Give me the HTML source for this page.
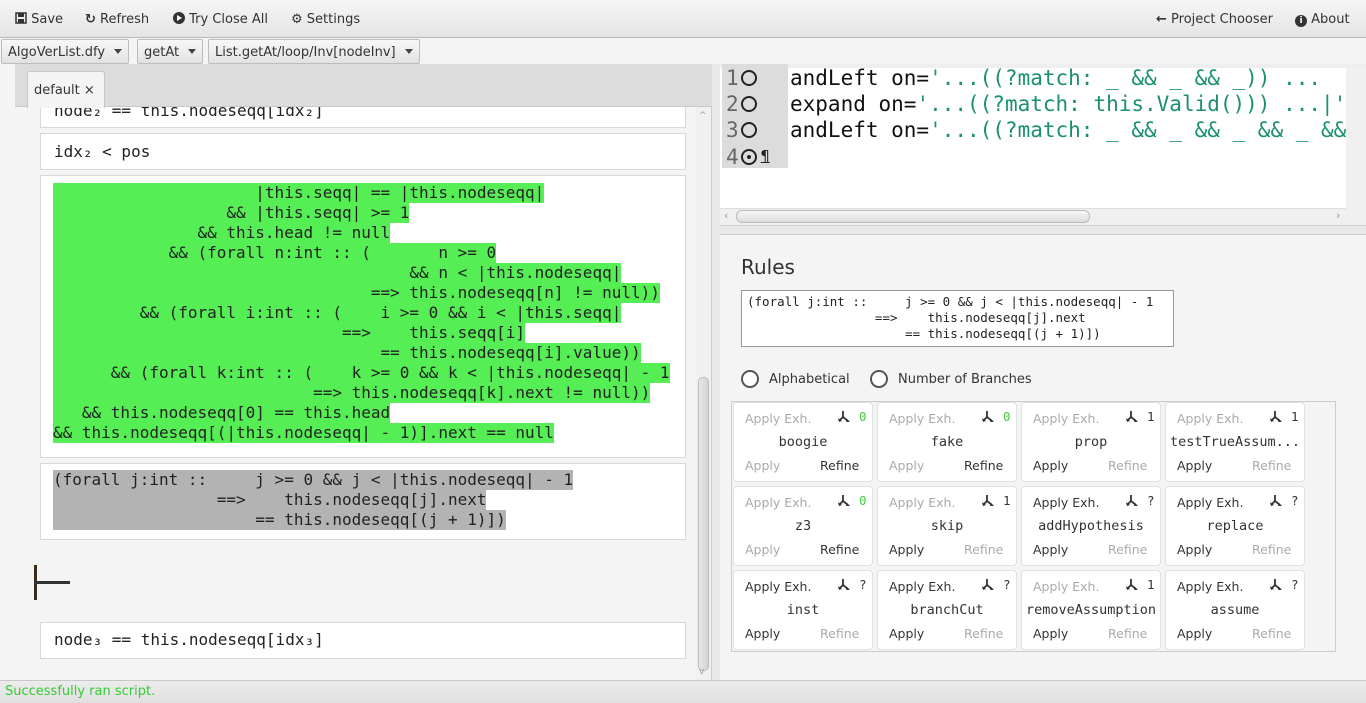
<!DOCTYPE html>
<html><head><meta charset="utf-8">
<style>
*{box-sizing:border-box;margin:0;padding:0}
body{width:1366px;height:703px;overflow:hidden;background:#f4f4f4;font-family:"DejaVu Sans","Liberation Sans",sans-serif;font-size:13px;color:#333;position:relative}
.a{position:absolute}
.mono{font-family:"DejaVu Sans Mono","Liberation Mono",monospace}
#tb{left:0;top:0;width:1366px;height:38px;background:linear-gradient(#f6f6f6,#e4e4e4);border-bottom:1px solid #b8b8b8}
.tbi{top:12px;font-size:13px;color:#333;white-space:nowrap}
.dd{top:39px;height:25px;background:linear-gradient(#f8f8f8,#e2e2e2);border:1px solid #bdbdbd;border-radius:2px;padding:5px 6px 0 6px;font-size:13px;white-space:nowrap}
.dd:after{content:"";display:inline-block;margin-left:9px;border-left:4px solid transparent;border-right:4px solid transparent;border-top:5px solid #444;vertical-align:2px}
.card{background:#fff;border:1px solid #d8d8d8;left:40px;width:646px}
.ln{white-space:pre;font-size:16px;line-height:20px;height:20px;color:#222}
.g{background:#55ee55;display:inline-block;height:20px}
.gr{background:#b3b3b3;display:inline-block;height:20px}
.rc{width:140px;height:80px;background:#fff;border:1px solid #e0e0e0;border-radius:4px}
.rc span{position:absolute;font-size:12.5px;white-space:nowrap}
.d{color:#333}.l{color:#aaa}
.nm{left:0;width:138px;text-align:center;top:31px;font-family:"DejaVu Sans Mono",monospace;font-size:13.5px!important;color:#333}
.cl{white-space:pre;height:26px}
.circ{display:inline-block;width:16px;height:16px;border:2px solid #222;border-radius:50%;margin-left:2px;vertical-align:-1px;position:relative}
</style></head><body>
<div id="tb" class="a"></div>
<div class="a tbi" style="left:15px"><svg width="12" height="12" viewBox="0 0 12 12" style="vertical-align:-1px"><rect x="1" y="1" width="10" height="10" fill="none" stroke="#333" stroke-width="1.5"/><rect x="3" y="1" width="6" height="4" fill="#333"/><rect x="3" y="7" width="6" height="4" fill="#333"/></svg> Save</div>
<div class="a tbi" style="left:85px"><span style="font-weight:bold">&#x21bb;</span> Refresh</div>
<div class="a tbi" style="left:173px"><span style="display:inline-block;width:12px;height:12px;border-radius:6px;background:#333;vertical-align:-1px;position:relative"><span style="position:absolute;left:4px;top:3px;border-left:5px solid #fff;border-top:3px solid transparent;border-bottom:3px solid transparent"></span></span> Try Close All</div>
<div class="a tbi" style="left:291px">&#x2699; Settings</div>
<div class="a tbi" style="left:1156px"><b>&#x2190;</b> Project Chooser</div>
<div class="a tbi" style="left:1295px"><span style="display:inline-block;width:12px;height:12px;border-radius:6px;background:#333;color:#fff;font-size:9px;text-align:center;line-height:12px;font-weight:bold;vertical-align:0px">i</span> About</div>

<div class="a dd" style="left:1px">AlgoVerList.dfy</div>
<div class="a dd" style="left:137px">getAt</div>
<div class="a dd" style="left:208px">List.getAt/loop/Inv[nodeInv]</div>

<!-- left panel -->
<div class="a" style="left:0;top:64px;width:712px;height:616px;background:#f4f4f4;border-right:1px solid #ccc"></div>
<div class="a card" style="top:95px;height:33px"><div class="a ln mono" style="left:13px;top:5px">node₂ == this.nodeseqq[idx₂]</div></div>
<div class="a" style="left:15px;top:64px;width:697px;height:43px;background:#dcdcdc;border-bottom:1px solid #c8c8c8"></div>
<div class="a" style="left:27px;top:71px;width:78px;height:37px;background:#f4f4f4;border:1px solid #c8c8c8;border-bottom:none;border-radius:3px 3px 0 0;padding:11px 0 0 6px;font-size:13px">default ×</div>
<div class="a card" style="top:133px;height:37px"><div class="a ln mono" style="left:13px;top:8px">idx₂ &lt; pos</div></div>
<div class="a card" style="top:175px;height:283px">
<div class="a mono" style="left:12px;top:7px">
<div class="ln"><span class="g">                     |this.seqq| == |this.nodeseqq|</span></div>
<div class="ln"><span class="g">                  &amp;&amp; |this.seqq| &gt;= 1</span></div>
<div class="ln"><span class="g">               &amp;&amp; this.head != null</span></div>
<div class="ln"><span class="g">            &amp;&amp; (forall n:int :: (       n &gt;= 0</span></div>
<div class="ln"><span class="g">                                     &amp;&amp; n &lt; |this.nodeseqq|</span></div>
<div class="ln"><span class="g">                                 ==&gt; this.nodeseqq[n] != null))</span></div>
<div class="ln"><span class="g">         &amp;&amp; (forall i:int :: (    i &gt;= 0 &amp;&amp; i &lt; |this.seqq|</span></div>
<div class="ln"><span class="g">                              ==&gt;    this.seqq[i]</span></div>
<div class="ln"><span class="g">                                  == this.nodeseqq[i].value))</span></div>
<div class="ln"><span class="g">      &amp;&amp; (forall k:int :: (    k &gt;= 0 &amp;&amp; k &lt; |this.nodeseqq| - 1</span></div>
<div class="ln"><span class="g">                           ==&gt; this.nodeseqq[k].next != null))</span></div>
<div class="ln"><span class="g">   &amp;&amp; this.nodeseqq[0] == this.head</span></div>
<div class="ln"><span class="g">&amp;&amp; this.nodeseqq[(|this.nodeseqq| - 1)].next == null</span></div>
</div></div>
<div class="a card" style="top:463px;height:77px">
<div class="a mono" style="left:12px;top:6px">
<div class="ln"><span class="gr">(forall j:int ::     j &gt;= 0 &amp;&amp; j &lt; |this.nodeseqq| - 1</span></div>
<div class="ln"><span class="gr">                 ==&gt;    this.nodeseqq[j].next</span></div>
<div class="ln"><span class="gr">                     == this.nodeseqq[(j + 1)])</span></div>
</div></div>
<div class="a" style="left:34px;top:565px;width:3px;height:35px;background:#3a2a1a"></div>
<div class="a" style="left:34px;top:581px;width:36px;height:3px;background:#333"></div>
<div class="a card" style="top:622px;height:37px"><div class="a ln mono" style="left:13px;top:7px">node₃ == this.nodeseqq[idx₃]</div></div>
<!-- left scrollbar -->
<div class="a" style="left:696px;top:107px;width:15px;height:573px;background:#f0f0f0"></div>
<div class="a" style="left:698px;top:377px;width:11px;height:294px;background:linear-gradient(90deg,#e8e8e8,#d4d4d4);border:1px solid #bbb;border-radius:5px"></div>
<div class="a" style="left:699px;top:111px;font-size:9px;color:#999">^</div>
<div class="a" style="left:699px;top:667px;font-size:9px;color:#999">v</div>

<!-- divider -->
<div class="a" style="left:712px;top:64px;width:8px;height:616px;background:#e8e8e8"></div>

<!-- right code area -->
<div class="a" style="left:720px;top:64px;width:646px;height:161px;background:#fff;border-top:4px solid #eee"></div>
<div class="a" style="left:722px;top:64px;width:66px;height:104px;background:#dcdcdc"></div>
<div class="a mono" style="left:726px;top:65px;font-size:21px;line-height:26px;color:#666">
<div class="cl">1<span class="circ"></span></div>
<div class="cl">2<span class="circ"></span></div>
<div class="cl">3<span class="circ"></span></div>
<div class="cl">4<span class="circ"><span style="position:absolute;left:4px;top:4px;width:4px;height:4px;background:#222;border-radius:50%"></span></span><span style="font-size:15px;color:#222;margin-left:4px;text-decoration:underline;vertical-align:3px">¶</span></div>
</div>
<div class="a mono" style="left:790px;top:65px;width:556px;overflow:hidden;font-size:21px;line-height:26px;color:#111">
<div class="cl">andLeft on=<span style="color:#1a9070">'...((?match: _ &amp;&amp; _ &amp;&amp; _)) ... </span></div>
<div class="cl">expand on=<span style="color:#1a9070">'...((?match: this.Valid())) ...|'</span></div>
<div class="cl">andLeft on=<span style="color:#1a9070">'...((?match: _ &amp;&amp; _ &amp;&amp; _ &amp;&amp; _ &amp;&amp; _</span></div>
</div>
<div class="a" style="left:1346px;top:68px;width:20px;height:157px;background:#f0f0f0"></div>
<div class="a" style="left:720px;top:208px;width:626px;height:17px;background:#f0f0f0;border-top:1px solid #ddd"></div>
<div class="a" style="left:736px;top:210px;width:354px;height:13px;background:linear-gradient(#f6f6f6,#dedede);border:1px solid #bbb;border-radius:6px"></div>
<div class="a" style="left:724px;top:209px;font-size:11px;color:#999">‹</div>
<div class="a" style="left:1336px;top:209px;font-size:11px;color:#999">›</div>
<div class="a" style="left:720px;top:225px;width:646px;height:10px;background:#e8e8e8;border-top:1px solid #ccc;border-bottom:1px solid #ccc"></div>

<!-- Rules -->
<div class="a" style="left:741px;top:255px;font-size:20px;color:#333">Rules</div>
<div class="a mono" style="left:741px;top:290px;width:433px;height:57px;background:#fff;border:1px solid #999;padding:3px 5px;font-size:12.5px;line-height:16px;white-space:pre;color:#222">(forall j:int ::     j &gt;= 0 &amp;&amp; j &lt; |this.nodeseqq| - 1
                 ==&gt;    this.nodeseqq[j].next
                     == this.nodeseqq[(j + 1)])</div>
<div class="a" style="left:741px;top:370px;width:18px;height:18px;border:2px solid #555;border-radius:50%;background:#fff"></div>
<div class="a" style="left:769px;top:372px;font-size:13px">Alphabetical</div>
<div class="a" style="left:870px;top:370px;width:18px;height:18px;border:2px solid #555;border-radius:50%;background:#fff"></div>
<div class="a" style="left:898px;top:372px;font-size:13px">Number of Branches</div>
<div class="a" style="left:731px;top:401px;width:605px;height:251px;border:1px solid #ccc;background:#f4f4f4"></div>

<svg width="0" height="0" style="position:absolute"><defs><symbol id="br" viewBox="0 0 14 14"><path d="M5 1v6l-4 4M5 7l5 4" fill="none" stroke="#333" stroke-width="1.8"/><path d="M0 8l1 4 3-1zM9 9l3 3-4 0z" fill="#333"/></symbol></defs></svg>

<div id="grid"></div>
<script>
var d=[
["boogie",0,"0",0,1],["fake",0,"0",0,1],["prop",0,"1",1,0],["testTrueAssum...",0,"1",1,0],
["z3",0,"0",0,1],["skip",0,"1",1,0],["addHypothesis",1,"?",1,0],["replace",1,"?",1,0],
["inst",1,"?",1,0],["branchCut",1,"?",1,0],["removeAssumption",0,"1",1,0],["assume",1,"?",1,0]];
var h="";
d.forEach(function(c,i){var x=733+(i%4)*144,y=402+Math.floor(i/4)*84;
var nc=c[2]=="0"?"#4c4":"#333";
h+='<div class="a rc" style="left:'+x+'px;top:'+y+'px">'+
'<span class="'+(c[1]?'d':'l')+'" style="left:11px;top:8px">Apply Exh.</span>'+
'<svg class="a" style="left:104px;top:7px" width="14" height="14"><use href="#br"/></svg>'+
'<span style="left:125px;top:6px;color:'+nc+';font-family:DejaVu Sans Mono,monospace">'+c[2]+'</span>'+
'<span class="nm">'+c[0]+'</span>'+
'<span class="'+(c[3]?'d':'l')+'" style="left:11px;top:55px">Apply</span>'+
'<span class="'+(c[4]?'d':'l')+'" style="left:86px;top:55px">Refine</span></div>';});
document.getElementById("grid").innerHTML=h;
</script>

<!-- status bar -->
<div class="a" style="left:0;top:680px;width:1366px;height:23px;background:linear-gradient(#ececec,#e0e0e0);border-top:1px solid #c8c8c8"></div>
<div class="a" style="left:5px;top:684px;font-size:13px;color:#3c3">Successfully ran script.</div>
</body></html>
